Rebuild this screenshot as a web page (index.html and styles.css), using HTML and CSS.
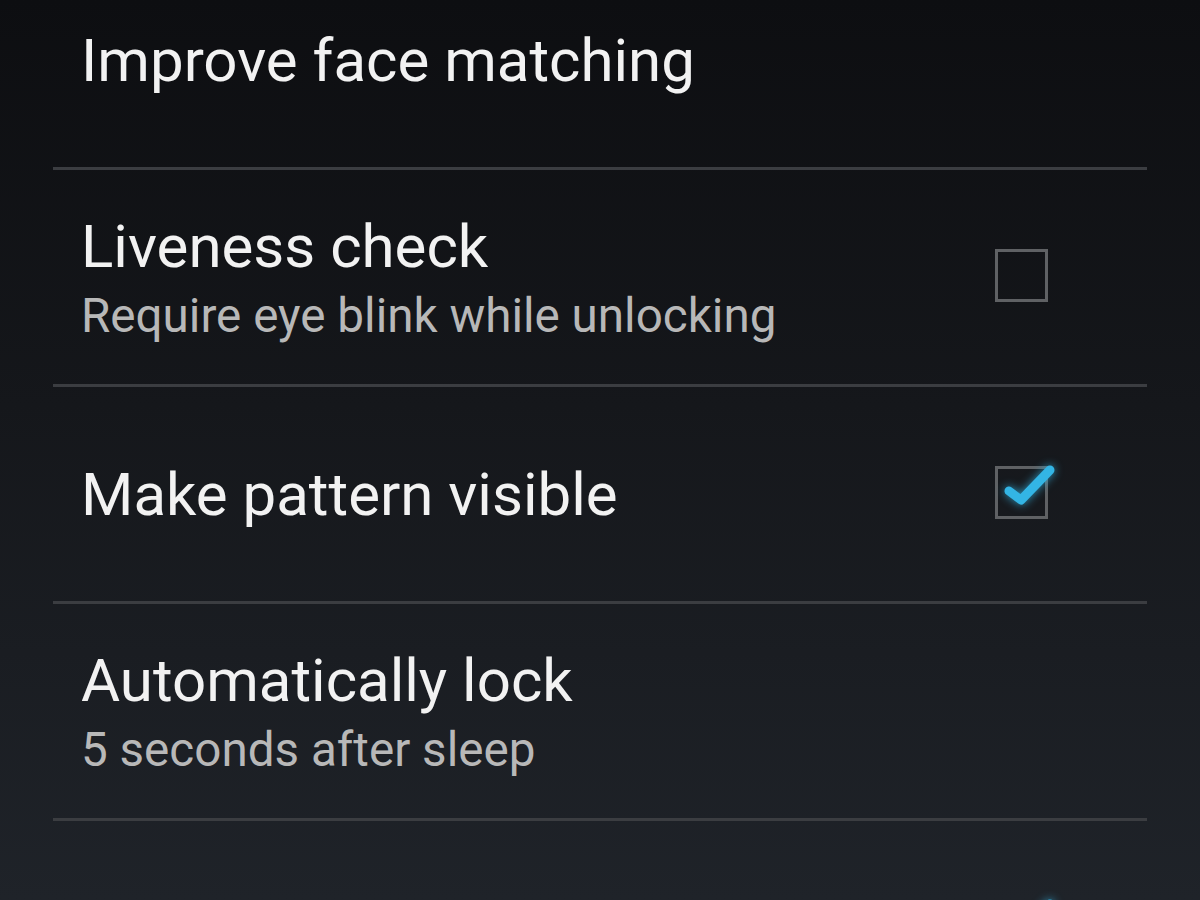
FILE: index.html
```html
<!DOCTYPE html>
<html lang="en">
<head>
  <meta charset="UTF-8" />
  <title>Screen lock settings</title>
  <link rel="stylesheet" href="styles.css">
</head>
<body>

  <div class="list">
    <div class="pref">
      <div class="text">
        <div class="title">Improve face matching</div>
      </div>
    </div>

    <div class="pref">
      <div class="text two">
        <div class="title">Liveness check</div>
        <div class="summary">Require eye blink while unlocking</div>
      </div>
      <div class="check"></div>
    </div>

    <div class="pref">
      <div class="text">
        <div class="title">Make pattern visible</div>
      </div>
      <div class="check checked">
        <svg viewBox="0 0 70 50" width="70" height="50"><path d="M14 25 L26 34 L55 4" /></svg>
      </div>
    </div>

    <div class="pref">
      <div class="text two">
        <div class="title">Automatically lock</div>
        <div class="summary">5 seconds after sleep</div>
      </div>
    </div>

    <div class="pref">
      <div class="text"></div>
      <div class="check checked">
        <svg viewBox="0 0 70 50" width="70" height="50"><path d="M14 25 L26 34 L55 4" /></svg>
      </div>
    </div>
  </div>

</body>
</html>
```

FILE: styles.css
```css
html, body {
  margin: 0;
  height: 100%;
  overflow: hidden;
}

body {
  font-family: Roboto, 'Noto Sans', sans-serif;
  background: linear-gradient(to bottom, #0d0e11 0%, #15171b 45%, #1f2329 100%);
  color: #f2f2f2;
}

.list {
  margin-top: -47px;
  padding: 0 53px;
}

.pref {
  display: flex;
  align-items: center;
  height: 214px;
  border-bottom: 3px solid #3b3d41;
  padding: 0 99px 0 28px;
  box-sizing: content-box;
}

.text {
  flex: 1;
  margin-top: 2px;
}

.text.two {
  margin-top: 8px;
}

.title {
  font-size: 60px;
  line-height: 70px;
  color: #f2f2f2;
}

.summary {
  font-size: 47.6px;
  line-height: 68px;
  color: #b8b8b8;
}

.check {
  position: relative;
  width: 47px;
  height: 47px;
  border: 3px solid #5f6164;
  margin-top: -4px;
}

.check svg {
  position: absolute;
  left: -3px;
  top: -3px;
  overflow: visible;
}

.check svg path {
  fill: none;
  stroke: #33b5e5;
  stroke-width: 9;
  stroke-linecap: round;
  stroke-linejoin: round;
  filter: drop-shadow(0 0 5px rgba(51, 181, 229, 0.8));
}
```
